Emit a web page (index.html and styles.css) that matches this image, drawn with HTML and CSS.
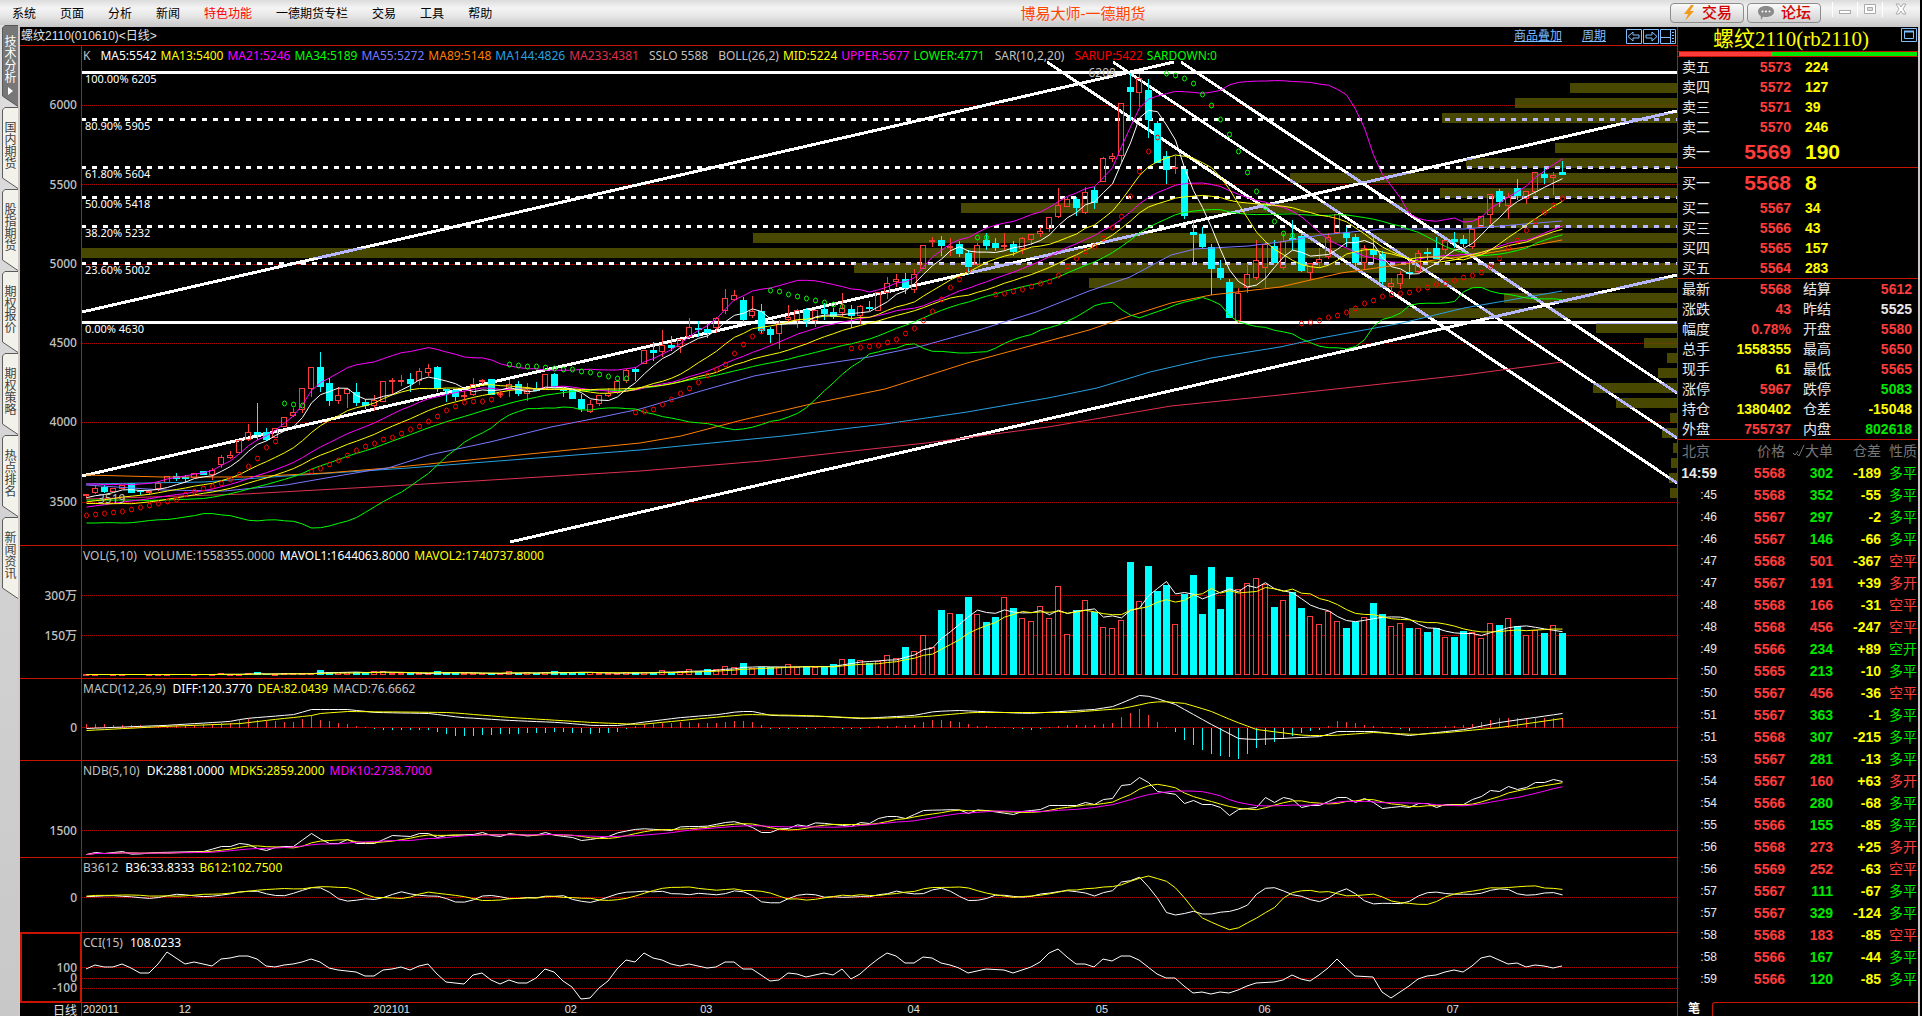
FILE: index.html
```html
<!DOCTYPE html>
<html lang="zh-CN">
<head>
<meta charset="utf-8">
<title>博易大师-一德期货</title>
<link rel="stylesheet" href="styles.css">
</head>
<body>
<div class="app">
  <header class="topbar">
    <nav class="menu">
      <a href="#">系统</a><a href="#">页面</a><a href="#">分析</a><a href="#">新闻</a><a href="#" class="hot">特色功能</a><a href="#">一德期货专栏</a><a href="#">交易</a><a href="#">工具</a><a href="#">帮助</a>
    </nav>
    <h1 class="brand">博易大师-一德期货</h1>
    <div class="actions">
      <button class="pill" type="button"><svg width="14" height="16" viewBox="0 0 14 16"><path d="M9 0 2 9h4L3 16 12 6H8l4-6z" fill="#f39a1d"/></svg>交易</button>
      <button class="pill" type="button"><svg width="18" height="15" viewBox="0 0 18 15"><path d="M9 1c5 0 8 2.400 8 5.500S14 12 9 12c-1 0-2 0-3-.3L4 15l-.3-4C2 10 1 8.400 1 6.500 1 3.400 4 1 9 1z" fill="#8a8a8a"/><g fill="#fff"><circle cx="5.500" cy="6.500" r="1"/><circle cx="9" cy="6.500" r="1"/><circle cx="12.500" cy="6.500" r="1"/></g></svg>论坛</button>
      <div class="window-controls">
        <button type="button" aria-label="最小化"><svg width="14" height="14" viewBox="0 0 14 14"><rect x="1.500" y="8.500" width="11" height="3" fill="#fff" stroke="#aaa"/></svg></button>
        <button type="button" aria-label="还原"><svg width="14" height="14" viewBox="0 0 14 14"><path d="M1.500 2.500h11v9h-11z" fill="#fff" stroke="#aaa"/><path d="M4.500 5.500h5v3h-5z" fill="#ddd" stroke="#aaa"/></svg></button>
        <button type="button" aria-label="关闭"><svg width="14" height="14" viewBox="0 0 14 14"><path d="M2 2h3l2 3 2-3h3L9 7l3 5H9L7 9l-2 3H2l3-5z" fill="#fff" stroke="#aaa"/></svg></button>
      </div>
    </div>
  </header>

  <div class="workspace">
    <nav class="tabs">
      <button type="button" class="tab active"><svg class="tab-shape" viewBox="0 0 17 82" preserveAspectRatio="none"><path d="M17 .5H3L.5 3V71L17 81.500"/></svg><span>技术分析</span><svg class="tab-arrow" width="5" height="8" viewBox="0 0 5 8"><path d="M0 0 5 4 0 8z" fill="#fff"/></svg></button>
      <button type="button" class="tab"><svg class="tab-shape" viewBox="0 0 17 82" preserveAspectRatio="none"><path d="M17 .5H3L.5 3V71L17 81.500"/></svg><span>国内期货</span></button>
      <button type="button" class="tab"><svg class="tab-shape" viewBox="0 0 17 82" preserveAspectRatio="none"><path d="M17 .5H3L.5 3V71L17 81.500"/></svg><span>股指期货</span></button>
      <button type="button" class="tab"><svg class="tab-shape" viewBox="0 0 17 82" preserveAspectRatio="none"><path d="M17 .5H3L.5 3V71L17 81.500"/></svg><span>期权报价</span></button>
      <button type="button" class="tab"><svg class="tab-shape" viewBox="0 0 17 82" preserveAspectRatio="none"><path d="M17 .5H3L.5 3V71L17 81.500"/></svg><span>期权策略</span></button>
      <button type="button" class="tab"><svg class="tab-shape" viewBox="0 0 17 82" preserveAspectRatio="none"><path d="M17 .5H3L.5 3V71L17 81.500"/></svg><span>热点排名</span></button>
      <button type="button" class="tab"><svg class="tab-shape" viewBox="0 0 17 82" preserveAspectRatio="none"><path d="M17 .5H3L.5 3V71L17 81.500"/></svg><span>新闻资讯</span></button>
    </nav>

    <main class="chart">
      <div class="chart-head">
        <h2>螺纹2110(010610)&lt;日线&gt;</h2>
        <div class="chart-links">
          <a href="#">商品叠加</a>
          <a href="#">周期</a>
          <div class="chart-icons">
            <button type="button" aria-label="左移"><svg width="16" height="15" viewBox="0 0 16 15"><path d="M.5.500h15v14H.5zM2 7.500 7 3v3h6v3H7v3z"/></svg></button>
            <button type="button" aria-label="右移"><svg width="16" height="15" viewBox="0 0 16 15"><path d="M.5.500h15v14H.5zM14 7.500 9 3v3H3v3h6v3z"/></svg></button>
            <button type="button" aria-label="布局"><svg width="16" height="15" viewBox="0 0 16 15"><path d="M.5.500h15v14H.5zM10.500 0v15M0 8.500h10M12 3.500h2M12 6.500h2M12 9.500h2M12 12.500h2"/></svg></button>
          </div>
        </div>
      </div>

      <section class="pane">
        <div class="axis">
          <span style="top:11.900%">6000</span><span style="top:27.800%">5500</span><span style="top:43.700%">5000</span><span style="top:59.600%">4500</span><span style="top:75.400%">4000</span><span style="top:91.400%">3500</span>
        </div>
        <div class="plot">
          <svg id="price" viewBox="82 46 1595 499" preserveAspectRatio="none"></svg>
          <p class="legend main"><span class="grp">K</span><span class="white">MA5:5542</span><span class="yellow">MA13:5400</span><span class="magenta">MA21:5246</span><span class="lime">MA34:5189</span><span class="violet">MA55:5272</span><span class="orange">MA89:5148</span><span class="blue">MA144:4826</span><span class="crimson grp">MA233:4381</span><span class="grp">SSLO 5588</span><span>BOLL(26,2)</span><span class="yellow">MID:5224</span><span class="magenta">UPPER:5677</span><span class="lime grp">LOWER:4771</span><span class="grp">SAR(10,2,20)</span><span class="red">SARUP:5422</span><span class="lime">SARDOWN:0</span></p>
          <div class="fib">
            <span style="top:6.600%">100.00% 6205</span><span style="top:16%">80.90% 5905</span><span style="top:25.600%">61.80% 5604</span><span style="top:31.700%">50.00% 5418</span><span style="top:37.500%">38.20% 5232</span><span style="top:44.900%">23.60% 5002</span><span style="top:56.700%">0.00% 4630</span>
            <span class="mark" style="top:5.400%;left:63.100%">6208</span><span class="mark" style="top:90.800%;left:1%">3519</span>
          </div>
        </div>
      </section>

      <section class="pane">
        <div class="axis"><span style="top:37.900%">300万</span><span style="top:68.200%">150万</span></div>
        <div class="plot">
          <svg id="volume" viewBox="82 546 1595 132" preserveAspectRatio="none"></svg>
          <p class="legend"><span>VOL(5,10)</span><span>VOLUME:1558355.0000</span><span class="white">MAVOL1:1644063.8000</span><span class="yellow">MAVOL2:1740737.8000</span></p>
        </div>
      </section>

      <section class="pane">
        <div class="axis"><span style="top:59.900%">0</span></div>
        <div class="plot">
          <svg id="macd" viewBox="82 679 1595 81" preserveAspectRatio="none"></svg>
          <p class="legend"><span>MACD(12,26,9)</span><span class="white">DIFF:120.3770</span><span class="yellow">DEA:82.0439</span><span>MACD:76.6662</span></p>
        </div>
      </section>

      <section class="pane">
        <div class="axis"><span style="top:72.400%">1500</span></div>
        <div class="plot">
          <svg id="ndb" viewBox="82 761 1595 96" preserveAspectRatio="none"></svg>
          <p class="legend"><span>NDB(5,10)</span><span class="white">DK:2881.0000</span><span class="yellow">MDK5:2859.2000</span><span class="magenta">MDK10:2738.7000</span></p>
        </div>
      </section>

      <section class="pane">
        <div class="axis"><span style="top:53.400%">0</span></div>
        <div class="plot">
          <svg id="b3612" viewBox="82 858 1595 74" preserveAspectRatio="none"></svg>
          <p class="legend"><span>B3612</span><span class="white">B36:33.8333</span><span class="yellow">B612:102.7500</span></p>
        </div>
      </section>

      <section class="pane selected">
        <div class="axis"><span style="top:50%">100</span><span style="top:65.900%">0</span><span style="top:80.400%">-100</span></div>
        <div class="plot">
          <svg id="cci" viewBox="82 933 1595 69" preserveAspectRatio="none"></svg>
          <p class="legend"><span>CCI(15)</span><span class="white">108.0233</span></p>
        </div>
      </section>

      <div class="dates">
        <div class="period">日线</div>
        <div class="months"><span style="left:0">202011</span><span style="left:6%">12</span><span style="left:18.200%">202101</span><span style="left:30.200%">02</span><span style="left:38.700%">03</span><span style="left:51.700%">04</span><span style="left:63.500%">05</span><span style="left:73.700%">06</span><span style="left:85.500%">07</span></div>
      </div>
    </main>

    <aside class="quote">
      <div class="quote-head">
        <h2>螺纹2110(rb2110)</h2>
        <button type="button" aria-label="展开"><svg width="16" height="14" viewBox="0 0 16 14"><path d="M.5.500h15v13H.5zM3.500 3.500h9v7h-9z"/><path d="M3 3.500h10" stroke-width="2"/></svg></button>
      </div>
      <div class="ratio"><i style="width:38.600%"></i></div>
      <table class="depth">
        <tr><th>卖五</th><td class="up">5573</td><td class="qty">224</td></tr>
        <tr><th>卖四</th><td class="up">5572</td><td class="qty">127</td></tr>
        <tr><th>卖三</th><td class="up">5571</td><td class="qty">39</td></tr>
        <tr><th>卖二</th><td class="up">5570</td><td class="qty">246</td></tr>
        <tr class="best"><th>卖一</th><td class="up">5569</td><td class="qty">190</td></tr>
      </table>
      <table class="depth">
        <tr class="best"><th>买一</th><td class="up">5568</td><td class="qty">8</td></tr>
        <tr><th>买二</th><td class="up">5567</td><td class="qty">34</td></tr>
        <tr><th>买三</th><td class="up">5566</td><td class="qty">43</td></tr>
        <tr><th>买四</th><td class="up">5565</td><td class="qty">157</td></tr>
        <tr><th>买五</th><td class="up">5564</td><td class="qty">283</td></tr>
      </table>
      <table class="stats">
        <tr><th>最新</th><td class="up">5568</td><th>结算</th><td class="up">5612</td></tr>
        <tr><th>涨跌</th><td class="up">43</td><th>昨结</th><td>5525</td></tr>
        <tr><th>幅度</th><td class="up">0.78%</td><th>开盘</th><td class="up">5580</td></tr>
        <tr><th>总手</th><td class="qty">1558355</td><th>最高</th><td class="up">5650</td></tr>
        <tr><th>现手</th><td class="qty">61</td><th>最低</th><td class="up">5565</td></tr>
        <tr><th>涨停</th><td class="up">5967</td><th>跌停</th><td class="down">5083</td></tr>
        <tr><th>持仓</th><td class="qty">1380402</td><th>仓差</th><td class="qty">-15048</td></tr>
        <tr><th>外盘</th><td class="up">755737</td><th>内盘</th><td class="down">802618</td></tr>
      </table>
      <table class="ticks">
        <thead><tr><th>北京</th><th>价格</th><th><svg width="12" height="13" viewBox="0 0 12 13"><path d="M0 9l2 2 3-4M4 10l2 2 5-11"/></svg>大单</th><th>仓差</th><th>性质</th></tr></thead>
        <tbody>
        <tr class="g first"><td>14:59</td><td>5568</td><td>302</td><td>-189</td><td>多平</td></tr>
        <tr class="g"><td>:45</td><td>5568</td><td>352</td><td>-55</td><td>多平</td></tr>
        <tr class="g"><td>:46</td><td>5567</td><td>297</td><td>-2</td><td>多平</td></tr>
        <tr class="g"><td>:46</td><td>5567</td><td>146</td><td>-66</td><td>多平</td></tr>
        <tr class="r"><td>:47</td><td>5568</td><td>501</td><td>-367</td><td>空平</td></tr>
        <tr class="r"><td>:47</td><td>5567</td><td>191</td><td>+39</td><td>多开</td></tr>
        <tr class="r"><td>:48</td><td>5568</td><td>166</td><td>-31</td><td>空平</td></tr>
        <tr class="r"><td>:48</td><td>5568</td><td>456</td><td>-247</td><td>空平</td></tr>
        <tr class="g"><td>:49</td><td>5566</td><td>234</td><td>+89</td><td>空开</td></tr>
        <tr class="g"><td>:50</td><td>5565</td><td>213</td><td>-10</td><td>多平</td></tr>
        <tr class="r"><td>:50</td><td>5567</td><td>456</td><td>-36</td><td>空平</td></tr>
        <tr class="g"><td>:51</td><td>5567</td><td>363</td><td>-1</td><td>多平</td></tr>
        <tr class="g"><td>:51</td><td>5568</td><td>307</td><td>-215</td><td>多平</td></tr>
        <tr class="g"><td>:53</td><td>5567</td><td>281</td><td>-13</td><td>多平</td></tr>
        <tr class="r"><td>:54</td><td>5567</td><td>160</td><td>+63</td><td>多开</td></tr>
        <tr class="g"><td>:54</td><td>5566</td><td>280</td><td>-68</td><td>多平</td></tr>
        <tr class="g"><td>:55</td><td>5566</td><td>155</td><td>-85</td><td>多平</td></tr>
        <tr class="r"><td>:56</td><td>5568</td><td>273</td><td>+25</td><td>多开</td></tr>
        <tr class="r"><td>:56</td><td>5569</td><td>252</td><td>-63</td><td>空平</td></tr>
        <tr class="g"><td>:57</td><td>5567</td><td>111</td><td>-67</td><td>多平</td></tr>
        <tr class="g"><td>:57</td><td>5567</td><td>329</td><td>-124</td><td>多平</td></tr>
        <tr class="r"><td>:58</td><td>5568</td><td>183</td><td>-85</td><td>空平</td></tr>
        <tr class="g"><td>:58</td><td>5566</td><td>167</td><td>-44</td><td>多平</td></tr>
        <tr class="g"><td>:59</td><td>5566</td><td>120</td><td>-85</td><td>多平</td></tr>
        </tbody>
      </table>
      <div class="quote-foot"><span>笔</span><div></div></div>
    </aside>
  </div>
</div>
<script src="chart.js"></script>
</body>
</html>
```
FILE: styles.css
```css
* { box-sizing: border-box; }
body { margin: 0; background: #000; color: #c0c0c0; font: 12px/18px "Noto Sans", "Noto Sans CJK SC", sans-serif; }
h1, h2, p { margin: 0; font-weight: 400; }
button { margin: 0; padding: 0; border: 0; background: none; font: inherit; color: inherit; cursor: pointer; }
a { color: inherit; text-decoration: none; }
svg { display: block; }

.app { display: flex; flex-direction: column; height: 100vh; min-height: 720px; overflow: hidden; }

/* top bar */
.topbar { display: grid; grid-template-columns: 1fr auto 1fr; align-items: center; flex: none; height: 27px; margin-right: 2px; padding: 0 2px 0 12px; background: linear-gradient(#dcdcdc, #f4f4f4 30%, #e6e6e6 60%, #c6c6c6); font-family: "Liberation Sans", "Noto Sans CJK SC", sans-serif; }
.menu { display: flex; gap: 24px; color: #000; white-space: nowrap; }
.menu .hot { color: #f00; }
.brand { padding-left: 236px; color: #ff4500; font-size: 15px; line-height: 24px; white-space: nowrap; }
.actions { display: flex; justify-content: flex-end; gap: 3px; height: 24px; }
.pill { display: flex; align-items: center; justify-content: center; gap: 6px; width: 74px; height: 20px; margin-top: 1px; border: 1px solid #8c8c8c; border-radius: 4px; background: linear-gradient(#fafafa, #d2d2d2); color: #d40000; font-size: 15px; line-height: 18px; font-weight: 500; }
.window-controls { display: flex; margin-left: 8px; }
.window-controls button { display: flex; justify-content: center; width: 25px; height: 15px; border-left: 1px solid #fff; }
.window-controls button:last-child { width: 36px; }

/* workspace */
.workspace { display: grid; grid-template-columns: 20px minmax(0, 1fr) 245px; flex: 1; min-height: 0; }
.tabs { margin-top: -2px; padding-left: 2px; border-right: 2px solid #cfc8c8; background: linear-gradient(#dedede, #c8c8c8); z-index: 1; }
.tab { position: relative; display: flex; flex-direction: column; align-items: center; width: 16px; height: 82px; padding-top: 14px; color: #404040; font: 12px/12px "Noto Sans CJK SC", sans-serif; }
.tab span { position: relative; writing-mode: vertical-rl; }
.tab-shape { position: absolute; inset: 0; width: 100%; height: 100%; fill: #f3f2ea; stroke: #555; }
.tab.active { padding-top: 10px; color: #fff; }
.active .tab-shape { fill: #777; }
.tab-arrow { position: relative; margin-top: 4px; }

/* chart column */
.chart { display: grid; grid-template-rows: 19px 500fr 133fr 82fr 97fr 75fr 70fr 13px; min-width: 0; min-height: 0; background: #000; }
.chart-head { display: flex; justify-content: space-between; align-items: center; padding: 0 1px; border-bottom: 1px solid #c81400; font-family: "Liberation Sans", "Noto Sans CJK SC", sans-serif; color: #e0e0e0; }
.chart-head h2 { font-size: 12px; line-height: 18px; }
.chart-links { display: flex; align-items: center; gap: 20px; color: #7fbfff; }
.chart-links a { text-decoration: underline; }
.chart-icons { display: flex; gap: 1px; }
.chart-icons path, .quote-head path { fill: none; stroke: #7fbfff; }
.pane, .dates { display: grid; grid-template-columns: 62px minmax(0, 1fr); min-height: 0; }
.pane { border-bottom: 1px solid #c81400; }
.axis { position: relative; border-right: 1px solid #c81400; }
.axis span { position: absolute; right: 4px; transform: translateY(-50%); font-size: 12px; line-height: 10px; font-weight: 500; }
.selected { position: relative; }
.selected .axis::before { content: ""; position: absolute; inset: -1px -1px -1px 0; border: 2px solid #c81400; }
.plot { position: relative; min-width: 0; }
.plot > svg { position: absolute; inset: 0; width: 100%; height: 100%; isolation: isolate; }
.legend { position: relative; display: flex; gap: 5px; padding: 1px 0 0 1px; white-space: nowrap; }
.legend span:first-child { margin-right: 2px; }
.legend.main { gap: 4px; }
.legend .grp, .legend .grp:first-child { margin-right: 6px; }
.fib span { position: absolute; left: 3px; transform: translateY(-50%); color: #fff; font-size: 11px; line-height: 14px; white-space: nowrap; }
.fib .mark { color: #c0c0c0; font-size: 12px; }
.white { color: #fff; }
.yellow { color: #ff0; }
.magenta { color: #f0f; }
.lime { color: #0f0; }
.violet { color: #7878ff; }
.orange { color: #ff7f00; }
.blue { color: #28a0e0; }
.crimson { color: #e03050; }
.red { color: #f00; }
.dates { line-height: 13px; color: #e0e0e0; }
.period { padding-right: 4px; border-right: 1px solid #c81400; font: 12px/13px "Noto Sans CJK SC", sans-serif; text-align: right; white-space: nowrap; }
.months { position: relative; font-family: "Liberation Sans", sans-serif; font-size: 11px; }
.months span { position: absolute; left: 0; top: 0; padding-left: 1px; }

/* chart drawing */
.grid { fill: none; stroke: #b00000; stroke-dasharray: 1 1; }
.line { fill: none; stroke-width: 1; }
.trend { fill: none; stroke: #fff; stroke-width: 3; }
.dash { stroke-dasharray: 5 6; }
.profile { fill: #484800; mix-blend-mode: difference; }
.hollow { fill: none; stroke: #ff3c3c; }
.backed { fill: #000; stroke: #ff3c3c; }
.solid { fill: #0ff; }
.wick-r { stroke: #ff3c3c; }
.wick-c { stroke: #0ff; }
.sar { fill: none; }

/* quote panel */
.quote { min-width: 0; margin-right: 2px; border-left: 1px solid #c81400; border-right: 2px solid #cfc8c8; background: #000; font-family: "Liberation Sans", "Noto Sans CJK SC", sans-serif; font-size: 14px; display: flex; flex-direction: column; }
.quote-head { position: relative; height: 24px; padding-right: 14px; }
.quote-head h2 { color: #ff0; font: 21px/24px "Liberation Serif", "Noto Sans CJK SC", serif; text-align: center; }
.quote-head button { position: absolute; right: 1px; top: 1px; }
.ratio { height: 6px; padding: 0 1px; border: solid #c81400; border-width: 1px 0; background: #00e800 content-box; }
.ratio i { display: block; height: 100%; background: #ff3c3c; }
table { width: 100%; border-collapse: collapse; table-layout: fixed; border-bottom: 1px solid #c81400; }
td, th { height: 20px; padding: 0; line-height: 20px; font-weight: 700; white-space: nowrap; }
th { padding-left: 4px; font-weight: 400; text-align: left; color: #e8e8e8; }
td { text-align: right; color: #e8e8e8; }
.up { color: #ff3c3c; }
.down { color: #00e800; }
.qty { color: #ff0; }
.depth th { width: 56px; }
.depth .up { width: 57px; }
.depth .qty { padding-left: 14px; text-align: left; }
.best td { height: 30px; font-size: 21px; }
.stats th:first-child { width: 46px; }
.stats td:nth-child(2) { width: 67px; }
.stats th { width: 40px; padding-left: 12px; }
.stats th:first-child { padding-left: 4px; }
.stats td:last-child { padding-right: 6px; }
.ticks { border: 0; }
.ticks td, .ticks th { height: 22px; line-height: 22px; text-align: right; }
.ticks th { padding: 0; color: #777; }
.ticks th:first-child { width: 39px; padding-left: 4px; text-align: left; }
.ticks th:nth-child(2) { width: 68px; }
.ticks th:nth-child(3) { width: 48px; }
.ticks th:nth-child(4) { width: 48px; }
.ticks th svg { display: inline-block; fill: none; stroke: #777; vertical-align: -1px; }
.ticks td:first-child { font-weight: 400; font-size: 12px; }
.ticks .first td:first-child { font-weight: 700; font-size: 14px; }
.ticks td:nth-child(2) { color: #ff3c3c; }
.ticks td:nth-child(4) { color: #ff0; }
.ticks td:last-child { font-weight: 400; }
.ticks td:last-child, .ticks th:last-child { padding-right: 1px; }
.g td:nth-child(3), .g td:last-child { color: #00e800; }
.r td:nth-child(3), .r td:last-child { color: #ff3c3c; }
.quote-foot { display: flex; gap: 12px; height: 14px; margin-top: auto; padding-left: 10px; color: #fff; font-size: 12px; line-height: 14px; font-weight: 700; }
.quote-foot div { flex: 1; border: solid #c81400; border-width: 1px 0 0 1px; border-top-left-radius: 3px; }
```
FILE: chart.js
```js
// Daily bars: colour, body top, body bottom, high, low (chart y units).
const bars = `r494,496,494,498 r488,493,485,494 c487,492,485,493 r488,492 r485,489 c483,493 c491,492,490,495 r491,492,490,495 r483,489,481,491 r476,483 c476,479,473,481 c477,479,475,482 r473,478 c471,475 r470,475,468,480 r457,465,455,468 r455,458,451,459 r440,453 r432,440,424,441 c432,435,403,440 c432,440,428,441 r428,438 r417,427 r412,416,408,417 r388,410,388,413 r367,389,367,397
c367,387,352,392 c383,401,378,406 r395,401,387,404 r389,394,388,408 c392,403,383,406 c402,406,399,409 r400,406,395,411 r381,402 r380,382,378,394 r380,381,375,386 c379,384,373,392 r371,381,368,385 r368,373,364,376 c367,389,366,392 c389,391,389,402 c390,397,390,401 r395,397,391,401 r384,395,378,396 r380,382,379,384 c379,395 r393,395,391,398 r384,389,380,397 c384,394,381,396 r390,394,383,401 c389,391,382,391
r374,389 c374,388,373,388 c389,391,388,397 c390,399 c399,409,394,412 r404,412,400,413 r395,404,395,406 r393,396,388,397 r381,393,380,394 r370,381,369,383 c369,372,367,381 r350,364 c350,353,342,361 r345,352,330,357 c345,348,336,351 r339,347,339,353 r327,337,318,338 c328,330,321,337 c329,333,323,338 r318,328,317,333 r298,311,289,314 r295,300,290,301 c300,320,297,323 r311,316,296,318 c311,331,304,333
c329,335,327,343 r323,334,320,349 r317,320,305,322 r310,321,309,328 c310,322,308,327 r310,321,309,327 c309,314,303,320 c312,317,308,319 r308,313,293,317 c309,316,305,328 r306,316,305,324 c307,309,301,311 r292,311 r283,293,277,299 r279,282,274,287 c279,288,273,294 r274,290,269,293 r245,269 r240,242,237,247 c240,246,236,256 r246,247,238,256 c244,254,241,257 c253,267,250,275 r245,265,243,266 c240,246,233,250
c243,248,238,251 r245,247,233,250 c244,252,241,256 r238,249,237,254 r234,240,234,245 r231,234,227,237 r217,229,217,232 r205,217,188,218 r199,207,197,207 c199,208,197,216 r192,213,187,214 c190,203,187,209 r158,182,157,182 r156,159,153,162 r103,156,103,162 c87,92,73,120 r78,93,74,107 c90,120,79,138 c123,163,121,163 c156,170,151,184 r167,169,156,174 c169,216,169,219 c232,235,220,263 c234,247,227,248 c247,269,244,295
c268,278,260,280 c282,318,279,318 r293,321,288,323 r274,288,264,293 r260,278,240,280 r244,268,242,288 c246,263,240,263 r241,268,233,270 c238,240,220,250 c236,271,233,272 r263,273,263,280 r259,263,248,268 r237,257,233,259 r214,233 c233,238,227,247 c237,263,234,266 r248,263,245,269 c250,255,236,264 c254,282,251,285 r283,287,278,291 r274,284,271,289 c272,274,258,279 r253,272,250,273 c252,254,248,260 c248,259,237,259
r240,250,240,254 c239,242,232,248 c239,244,235,247 r229,247,229,249 r216,227 r194,215,194,224 c191,202,189,207 r197,206,193,219 c188,196,179,200 r191,199,191,204 r172,192,172,195 c174,178,168,184 r175,178,172,195 c172,175,161,175`
  .split(/\s+/).map(s => {
    const [t, b, h, l] = s.slice(1).split(',').map(Number);
    return { red: s[0] === 'r', t, b, h: h || t, l: l || b };
  });

const volTop = `674 674 674 674 674 674 674 674 674 674 674 674 674 674 674 673 674 674 673 672 674 674 673 673 673 673 670 672 672 672 672 672 671 671 673 673 673 673 673 671 672 672 673 673 673 673 673 671 673 672 673 672 671 672 672 672 672 673 673 673 672 672 672 672 670 672 671 669 671 669 669 666 667 663 668 667 667 667 664 667 666 667 666 664 659 659 660 663 661 655 658 647 651 635 647 610 613 614 597 614 622 617 597 608 618 621 606 618 586 634 610 600 612 627 628 620 562 601 566 591 585 624 594 575 614 567 609 577 589 583 578 584 607 600 592 608 616 624 611 621 628 622 617 603 614 626 623 628 628 632 628 637 637 631 632 638 623 625 618 626 635 630 633 625 633`.split(' ').map(Number);

const X = i => 86 + 9 * i;
const NS = 'http://www.w3.org/2000/svg';
const add = (svg, tag, attrs) => {
  const el = document.createElementNS(NS, tag);
  for (const k in attrs) el.setAttribute(k, attrs[k]);
  if (!('shape-rendering' in attrs)) el.setAttribute('shape-rendering', 'crispEdges');
  svg.appendChild(el);
};
const $ = id => document.getElementById(id);
const poly = (svg, pts, color) => add(svg, 'polyline', { class: 'line', stroke: color, points: pts.map(p => p.join()).join(' '), 'shape-rendering': 'auto' });
const series = (svg, ys, color) => poly(svg, ys.map((y, i) => [X(i) + .5, (y + .5).toFixed(1)]), color);
const grid = (svg, ...ys) => ys.forEach(y => add(svg, 'path', { class: 'grid', d: `M82 ${y + .5}H1677` }));
const parse = s => s.trim().split(/\s+/).map(p => p.split(',').map(Number));
const sample = pts => bars.map((_, i) => {
  const x = X(i);
  let k = 1;
  while (k < pts.length - 1 && pts[k][0] < x) k++;
  const [x0, y0] = pts[k - 1], [x1, y1] = pts[k];
  return y0 + (y1 - y0) * (x - x0) / (x1 - x0);
});

// Closes, with earlier sessions in front so long averages start at bar 0.
const history = [...Array(13).fill(488), ...Array(8).fill(515), ...Array(8).fill(504), ...Array(4).fill(498)];
const closes = [...history, ...bars.map(b => b.red ? b.t : b.b)];
const mean = a => a.reduce((s, v) => s + v, 0) / a.length;
const win = (i, n) => closes.slice(i + history.length - n + 1, i + history.length + 1);
const ma = n => bars.map((_, i) => mean(win(i, n)));
const movingOf = (arr, n) => arr.map((_, i) => mean(arr.slice(Math.max(0, i - n + 1), i + 1)));

// Price pane
const price = $('price');
grid(price, 105, 184, 264, 343, 422, 502);
[71, 321].forEach(y => add(price, 'rect', { x: 82, y, width: 1595, height: 3, fill: '#fff' }));
[119, 167, 197, 226, 263].forEach(y => add(price, 'path', { class: 'trend dash', d: `M81 ${y + .5}H1677` }));
['82,312 1174,62', '82,476 1677,111', '510,542 1677,275', '1047,62 1677,483', '1113,62 1677,438', '1181,62 1677,393']
  .forEach(points => add(price, 'polyline', { class: 'trend', points }));
[1570, 1515, 1442, 1677, 1555, 1466, 1290, 1440, 961, 1463, 753, 82, 854, 1089, 1504, 1349, 1596, 1644, 1667, 1658, 1593, 1616, 1670, 1662, 1673, 1671, 1669, 1670]
  .forEach((x, i) => add(price, 'rect', { class: 'profile', x, y: 83 + 15 * i, width: 1677 - x, height: 10 }));

const candle = (b, i) => {
  const x = X(i);
  const wick = b.red ? 'wick-r' : 'wick-c';
  if (b.h < b.t) add(price, 'path', { class: wick, d: `M${x + .5} ${b.h}V${b.t}` });
  if (b.l > b.b) add(price, 'path', { class: wick, d: `M${x + .5} ${b.b}V${b.l}` });
  if (b.red) add(price, 'rect', { class: 'hollow', x: x - 2.5, y: b.t + .5, width: 5, height: Math.max(b.b - b.t - 1, 1) });
  else add(price, 'rect', { class: 'solid', x: x - 3, y: b.t, width: 7, height: Math.max(b.b - b.t, 1) });
};
bars.forEach(candle);

const mid = ma(26);
const dev = bars.map((_, i) => Math.sqrt(mean(win(i, 26).map(v => (v - mid[i]) ** 2))));
poly(price, parse('86,499 245,494 408,485 640,471 762,461 926,443 1048,427 1171,406 1280,395 1464,375 1562,362'), '#e03050');
poly(price, parse('86,484 204,482 286,476 408,468 640,450 783,436 885,424 967,412 1048,398 1097,388 1150,372 1211,358 1280,347 1321,338 1402,323 1464,308 1562,291'), '#28a0e0');
poly(price, parse('86,475 163,477 245,477 326,473 388,468 640,443 681,436 742,420 811,404 885,389 967,363 1089,330 1130,316 1171,303 1211,295 1280,287 1341,273 1411,263 1476,255 1525,247 1562,240'), '#ff7f00');
poly(price, parse('86,485 163,490 224,491 286,485 326,478 367,471 388,468 429,455 490,442 551,427 592,419 640,409 701,391 754,376 803,367 869,357 922,346 979,330 1036,312 1089,291 1130,277 1171,255 1195,249 1248,246 1280,242 1321,235 1382,229 1464,229 1562,221'), '#7878ff');
series(price, ma(34), '#0f0');
series(price, ma(21), '#f0f');
series(price, ma(13), '#ff0');
series(price, mid, '#ff0');
series(price, mid.map((m, i) => m - 2 * dev[i]), '#f0f');
series(price, mid.map((m, i) => m + 2 * dev[i]), '#0f0');
series(price, ma(5), '#fff');

const sar = (start, color, list) => list.split(' ').forEach((y, k) =>
  add(price, 'ellipse', { class: 'sar', cx: X(start + k) + .5, cy: +y + .5, rx: 2, ry: 2.5, stroke: color, 'shape-rendering': 'auto' }));
sar(0, '#f00', '515 514 513 512 511 509 507 505 503 501 499 494 491 488 486 483 479 474 466 458 447 441');
sar(22, '#0f0', '403 404 405');
sar(25, '#f00', '471 468 464 460 455 450 446 443 439 437 433 429 426 421 416 410 406 402 401 401 399 394');
sar(47, '#0f0', '364 365 366 366 367 368 369 369 371 372 374 376 378 378');
sar(61, '#f00', '412 411 409 404 399 393 388 382 375 369 364 353 344 336 331');
sar(76, '#0f0', '290 291 294 296 298 300 302 304 306');
sar(85, '#f00', '348 347 346 345 342 339 333 328 320 311 299 287 279 270');
sar(99, '#0f0', '237 237');
sar(101, '#f00', '294 293 291 289 286 283 281 275 266 258 251 246 238 227 216 196 171 151 137');
sar(120, '#0f0', '73 75 78 83 94 105 119 134 151 172 191 207 221 233 235');
sar(135, '#f00', '323 322 320 317 315 312 308 303 300 296 294 293 292 289 287 284 283 280 277 275 272 266 258 248 240 230 221 212 205 198');

// Volume pane
const volume = $('volume');
grid(volume, 595, 635);
volTop.forEach((y, i) => {
  if (bars[i].red) add(volume, 'rect', { class: 'backed', x: X(i) - 2.5, y: y + .5, width: 5, height: Math.max(674 - y, 1) });
  else add(volume, 'rect', { class: 'solid', x: X(i) - 3, y, width: 7, height: 675 - y });
});
series(volume, movingOf(volTop, 5), '#fff');
series(volume, movingOf(volTop, 10), '#ff0');

// MACD pane
const macd = $('macd');
grid(macd, 727);
const diff = sample(parse('86,728 163,725 196,723 229,721 245,718 294,714 311,709 347,709 375,712 429,713 461,717 510,720 559,722 592,725 620,725 640,722 681,717 718,714 738,711 752,711 771,715 824,716 860,718 913,715 934,711 958,710 1028,713 1093,709 1113,706 1139,695 1150,696 1175,704 1211,724 1238,738 1252,739 1280,738 1321,736 1337,731 1373,731 1409,735 1464,729 1499,722 1562,713'));
const dea = sample(parse('86,730 163,726 241,723 265,720 311,715 320,713 347,711 449,712 510,717 592,722 640,724 701,718 746,714 803,715 873,718 926,716 971,712 1069,712 1122,708 1150,702 1162,701 1185,703 1211,711 1232,720 1256,729 1280,732 1304,735 1333,735 1373,732 1415,734 1447,732 1500,727 1562,718'));
diff.forEach((d, i) => {
  const h = Math.round(2 * (dea[i] - d));
  add(macd, 'path', { class: h >= 0 ? 'wick-r' : 'wick-c', d: `M${X(i) + .5} 728V${728 - (h || 1)}` });
});
series(macd, diff, '#fff');
series(macd, dea, '#ff0');

// NDB pane
const ndb = $('ndb');
grid(ndb, 830);
const dk = sample(parse('86,854 95,852 104,853 122,851 132,854 157,852 204,851 221,846 230,846 239,843 248,844 257,848 266,850 278,846 293,846 311,833 327,843 339,843 347,839 356,843 374,843 392,835 410,836 419,833 428,833 437,837 446,835 473,834 482,832 491,835 500,836 509,833 531,836 545,832 555,835 572,837 581,840 590,839 608,836 618,832 640,828 671,830 681,826 705,826 725,822 736,821 752,827 761,832 771,832 780,828 789,828 798,824 807,826 816,822 852,826 860,822 869,823 878,818 887,816 896,816 905,818 923,810 958,809 968,813 978,809 1013,814 1022,811 1040,809 1049,805 1076,805 1085,802 1094,804 1103,799 1112,798 1121,785 1130,784 1139,777 1148,782 1157,791 1176,794 1184,803 1193,800 1202,804 1211,804 1220,807 1229,815 1238,809 1256,807 1265,797 1274,802 1283,797 1292,799 1301,807 1310,805 1319,805 1337,797 1346,797 1355,802 1364,798 1373,802 1382,808 1400,806 1409,807 1418,803 1427,803 1436,807 1445,804 1463,804 1472,799 1481,796 1490,790 1499,791 1508,786 1517,789 1526,787 1535,782 1544,782 1553,779 1562,781'));
series(ndb, dk, '#fff');
series(ndb, movingOf(dk, 5), '#ff0');
series(ndb, movingOf(dk, 10), '#f0f');

// B3612 pane: spreads between short averages
const b3612 = $('b3612');
grid(b3612, 897);
const [m3, m6, m12] = [3, 6, 12].map(ma);
series(b3612, m3.map((v, i) => 897 + .5 * (v - m6[i])), '#fff');
series(b3612, m6.map((v, i) => 897 + .5 * (v - m12[i])), '#ff0');

// CCI pane
const cci = $('cci');
grid(cci, 967, 978, 988);
poly(cci, parse('86,969 95,965 104,967 113,967 122,964 131,968 140,973 149,973 158,964 167,952 185,964 194,962 212,966 221,959 230,958 239,956 248,956 257,959 266,966 275,967 284,965 293,964 302,962 311,959 320,962 329,968 338,970 356,972 365,976 374,976 383,970 392,969 401,967 410,970 419,966 428,964 437,974 446,982 464,984 473,975 482,973 491,980 500,984 509,980 518,983 527,983 536,978 545,969 554,972 563,981 572,987 581,999 590,998 599,988 608,981 617,969 626,960 635,962 644,953 653,958 662,960 671,964 680,966 689,964 707,968 716,967 725,962 734,962 743,969 752,969 761,975 770,981 779,980 788,973 797,974 806,977 815,975 824,973 833,975 842,969 851,979 860,974 869,966 878,959 887,953 896,956 905,963 914,963 923,957 932,958 941,963 950,965 959,968 968,973 977,971 986,969 1004,970 1013,973 1022,970 1031,967 1040,962 1049,953 1058,949 1067,957 1076,964 1085,964 1094,967 1103,959 1112,961 1121,956 1130,956 1139,960 1148,967 1157,974 1166,978 1175,978 1184,986 1193,993 1202,992 1211,994 1220,992 1229,993 1238,990 1247,986 1256,983 1274,982 1283,980 1292,975 1301,979 1310,981 1319,975 1328,968 1337,959 1346,968 1355,976 1373,977 1382,992 1391,998 1400,992 1409,986 1418,979 1427,976 1436,975 1445,972 1454,970 1463,972 1472,966 1481,958 1490,956 1499,960 1508,964 1517,963 1526,967 1535,965 1544,966 1553,968 1562,966'), '#fff');
```
